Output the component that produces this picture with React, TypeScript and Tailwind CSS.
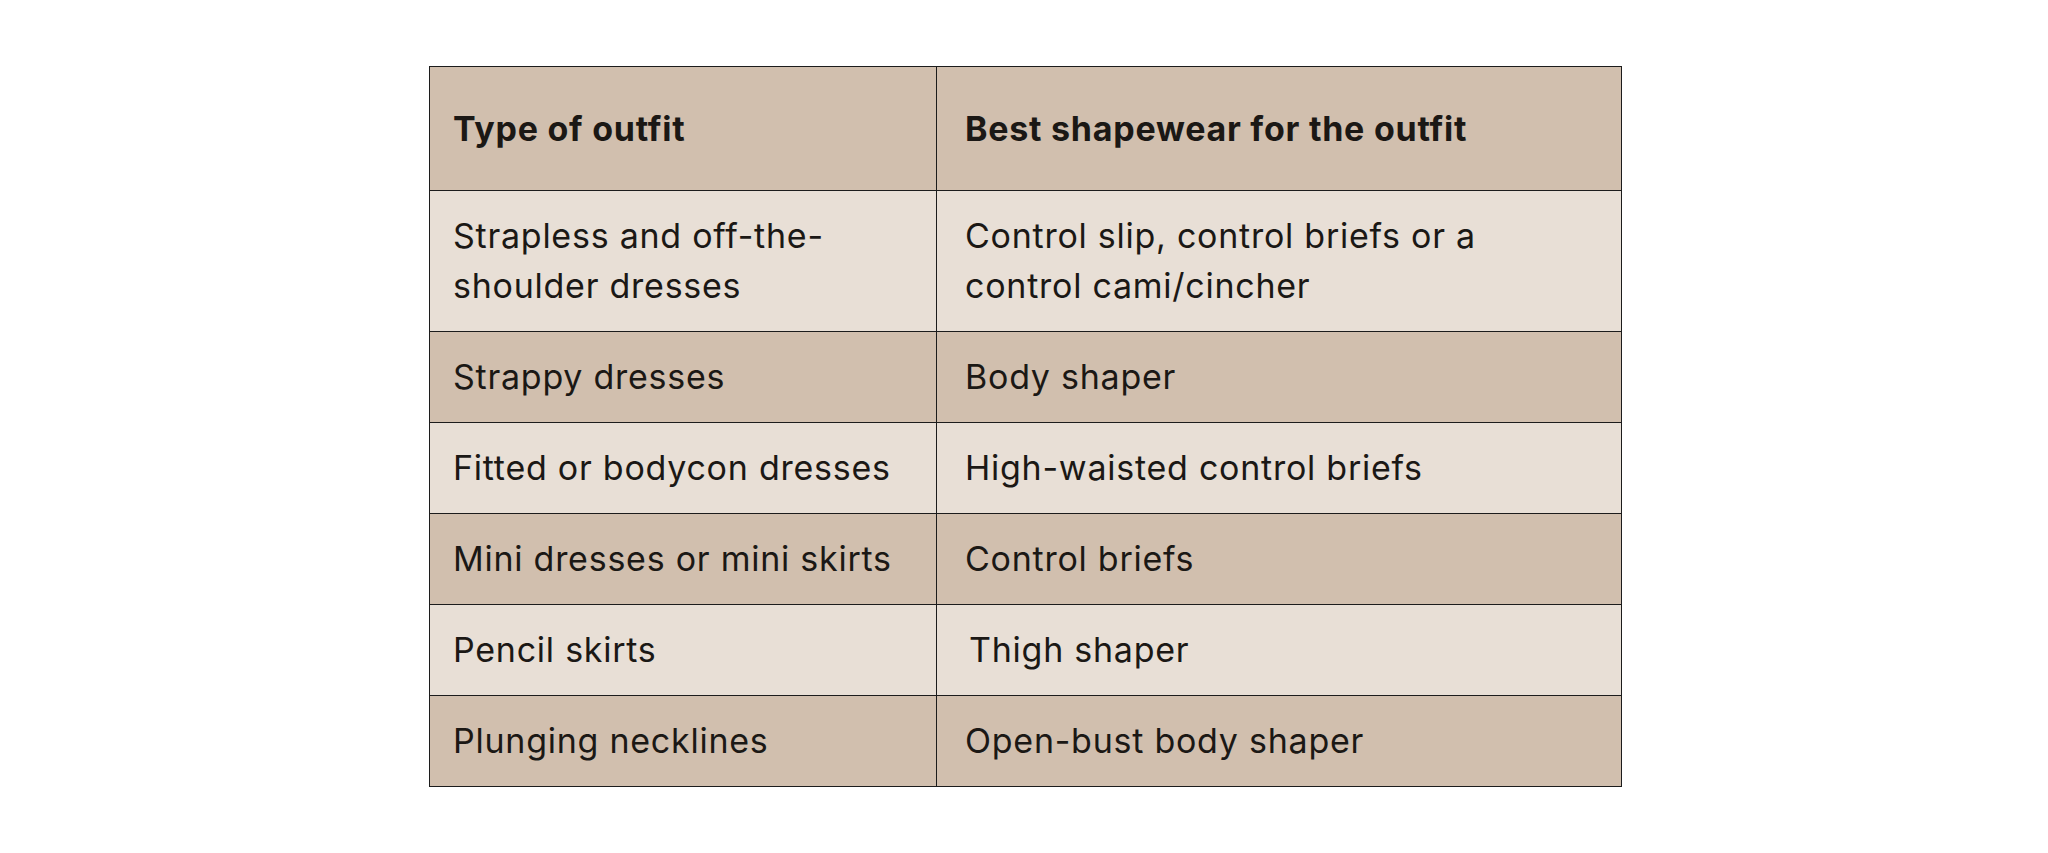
const rows: [React.ReactNode, React.ReactNode][] = [
  [
    <>
      <span className="block">Strapless and off-the-</span>
      <span className="block">shoulder dresses</span>
    </>,
    <>
      <span className="block">Control slip, control briefs or a</span>
      <span className="block">control cami/cincher</span>
    </>,
  ],
  ["Strappy dresses", "Body shaper"],
  ["Fitted or bodycon dresses", "High-waisted control briefs"],
  ["Mini dresses or mini skirts", "Control briefs"],
  ["Pencil skirts", <span className="pl-[4px]">Thigh shaper</span>],
  ["Plunging necklines", "Open-bust body shaper"],
];

export default function App() {
  return (
    <div className="min-h-[853px] bg-white pt-[66px] font-['Inter',sans-serif] text-[#1b1815]">
      <table className="ml-[429px] w-[1193px] table-fixed border-collapse text-[34px] leading-[50px] tracking-[0.022em]">
        <colgroup>
          <col className="w-[507px]" />
          <col />
        </colgroup>
        <thead>
          <tr className="bg-[#d1bfae]">
            <th className="h-[124px] border border-[#1c1c1c] pl-[23px] text-left align-middle font-bold">
              Type of outfit
            </th>
            <th className="h-[124px] border border-[#1c1c1c] pl-[28px] text-left align-middle font-bold">
              Best shapewear for the outfit
            </th>
          </tr>
        </thead>
        <tbody>
          {rows.map(([outfit, wear], i) => (
            <tr key={i} className={i % 2 === 0 ? "bg-[#e8dfd6]" : "bg-[#d1bfae]"}>
              <td className="whitespace-nowrap border border-[#1c1c1c] py-[20px] pl-[23px] align-middle">
                {outfit}
              </td>
              <td className="whitespace-nowrap border border-[#1c1c1c] py-[20px] pl-[28px] align-middle">
                {wear}
              </td>
            </tr>
          ))}
        </tbody>
      </table>
    </div>
  );
}
